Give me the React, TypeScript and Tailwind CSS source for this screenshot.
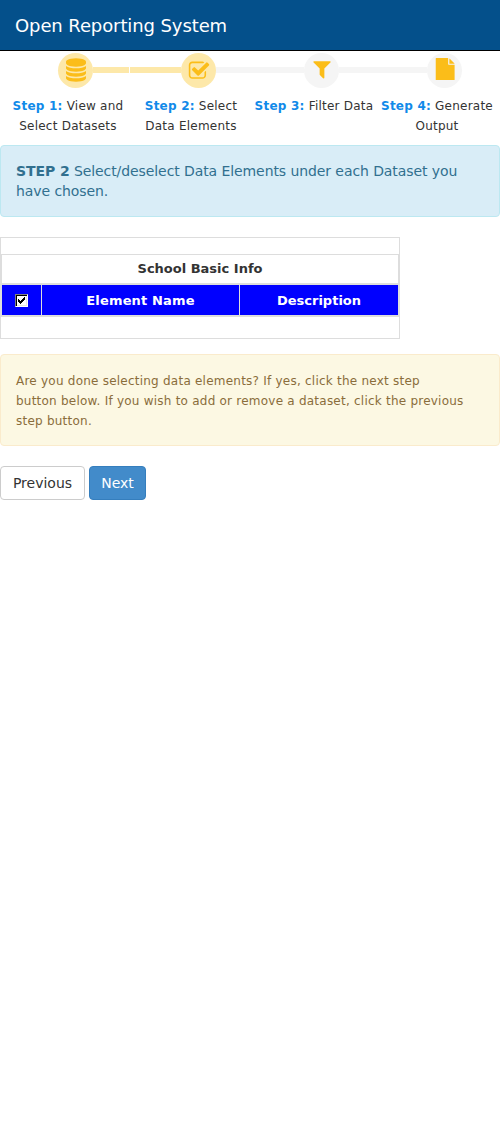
import { useState } from "react";

type StepItem = {
  label: string;
  lines: string[];
  done: boolean;
  icon: string;
  viewBox: string;
  iconClass: string;
};

const steps: StepItem[] = [
  {
    label: "Step 1:",
    lines: ["View and", "Select Datasets"],
    done: true,
    viewBox: "0 0 1536 1792",
    iconClass: "mb-[1px] ml-[1px] h-[24px] w-[20px]",
    icon: "M768 768q237 0 443-43t325-127v170q0 69-103 128t-280 93.5-385 34.5-385-34.5-280-93.5-103-128v-170q119 84 325 127t443 43zm0 768q237 0 443-43t325-127v170q0 69-103 128t-280 93.5-385 34.5-385-34.5-280-93.5-103-128v-170q119 84 325 127t443 43zm0-384q237 0 443-43t325-127v170q0 69-103 128t-280 93.5-385 34.5-385-34.5-280-93.5-103-128v-170q119 84 325 127t443 43zm0-1152q208 0 385 34.5t280 93.5 103 128v128q0 69-103 128t-280 93.5-385 34.5-385-34.5-280-93.5-103-128v-128q0-69 103-128t280-93.5 385-34.5z",
  },
  {
    label: "Step 2:",
    lines: ["Select", "Data Elements"],
    done: true,
    viewBox: "0 0 1792 1792",
    iconClass: "ml-[1px] h-[22px] w-[22px]",
    icon: "M1472 930v318q0 119-84.5 203.5t-203.5 84.5h-832q-119 0-203.5-84.5t-84.5-203.5v-832q0-119 84.5-203.5t203.5-84.5h832q63 0 117 25 15 7 18 23 3 17-9 29l-49 49q-10 10-23 10-3 0-9-2-23-6-45-6h-832q-66 0-113 47t-47 113v832q0 66 47 113t113 47h832q66 0 113-47t47-113v-254q0-13 9-22l64-64q10-10 23-10 6 0 12 3 20 8 20 29zm231-489l-814 814q-24 24-57 24t-57-24l-430-430q-24-24-24-57t24-57l110-110q24-24 57-24t57 24l263 263 647-647q24-24 57-24t57 24l110 110q24 24 24 57t-24 57z",
  },
  {
    label: "Step 3:",
    lines: ["Filter Data"],
    done: false,
    viewBox: "0 0 1792 1792",
    iconClass: "mb-[3px] h-[22px] w-[22px]",
    icon: "M1595 295q17 41-14 70l-493 493v742q0 42-39 59-13 5-25 5-27 0-45-19l-256-256q-19-19-19-45v-486l-493-493q-31-29-14-70 17-39 59-39h1280q42 0 59 39z",
  },
  {
    label: "Step 4:",
    lines: ["Generate", "Output"],
    done: false,
    viewBox: "0 0 1792 1792",
    iconClass: "mb-[3px] ml-[1px] h-[22px] w-[22px]",
    icon: "M1250 460v-420q22 14 36 28l364 364q14 14 28 28h-428zm-96 25q0 40 28 55t68 15h428v1209q0 28-28 28h-1480q-28 0-28-28v-1736q0-28 28-28h984v485z",
  },
];

function StepDot({ step }: { step: StepItem }) {
  return (
    <div className={`flex size-[35px] shrink-0 items-center justify-center rounded-full ${step.done ? "bg-[#fde8a9]" : "bg-[#f5f5f5]"}`}>
      <svg viewBox={step.viewBox} className={`${step.iconClass} shrink-0 fill-[#fbbd19]`}>
        <path d={step.icon} />
      </svg>
    </div>
  );
}

function Wizard() {
  return (
    <div className="pt-[2px]">
      <div className="flex items-start pl-[58px]">
        <StepDot step={steps[0]} />
        <div className="mt-[14px] h-[6px] w-[36px] bg-[#fde8a9]" />
        <div className="mt-[14px] ml-px h-[6px] w-[51px] bg-[#fde8a9]" />
        <StepDot step={steps[1]} />
        <div className="mt-[14px] h-[6px] w-[88px] bg-[#f5f5f5]" />
        <StepDot step={steps[2]} />
        <div className="mt-[14px] h-[6px] w-[88px] bg-[#f5f5f5]" />
        <StepDot step={steps[3]} />
      </div>
      <div className="flex h-[47px] pt-[8px] pl-[6.5px] text-[12px] leading-[20px] tracking-[0.23px]">
        {steps.map((s) => (
          <div key={s.label} className="flex w-[123px] shrink-0 flex-col items-center whitespace-nowrap">
            <div className="flex gap-[4px]">
              <b className="text-[#118ae9]">{s.label}</b>
              <span>{s.lines[0]}</span>
            </div>
            {s.lines[1] && <div>{s.lines[1]}</div>}
          </div>
        ))}
      </div>
    </div>
  );
}

function Checkbox() {
  const [on, setOn] = useState(true);
  return (
    <button
      type="button"
      role="checkbox"
      aria-checked={on}
      onClick={() => setOn(!on)}
      className="flex size-[13px] items-center justify-center border border-t-[#808080] border-r-white border-b-white border-l-[#808080] bg-white shadow-[inset_1px_1px_0_#000,inset_-1px_-1px_0_#e8e6e0]"
    >
      {on && (
        <svg viewBox="0 0 7 7" className="size-[7px] fill-black" shapeRendering="crispEdges">
          <path d="M0 2h1v1h1v1h1v-1h1v-1h1v-1h1v-1h1v3h-1v1h-1v1h-1v1h-1v1h-1v-1h-1v-1h-1z" />
        </svg>
      )}
    </button>
  );
}

function ElementTable() {
  return (
    <div className="mt-[20px] h-[102px] w-[400px] border border-[#ddd] pt-[16px] text-[13px] font-bold">
      <div className="border border-b-0 border-[#ddd]">
        <div className="flex h-[28px] items-center justify-center">School Basic Info</div>
        <div className="flex h-[34px] border-y-2 border-[#ddd] bg-[#0000ff] text-white">
          <div className="flex w-[40px] items-center justify-center border-r border-[#ddd]">
            <Checkbox />
          </div>
          <div className="flex w-[198px] items-center justify-center border-r border-[#ddd] pt-[2px] tracking-[0.15px]">Element Name</div>
          <div className="flex flex-1 items-center justify-center pt-[2px]">Description</div>
        </div>
      </div>
    </div>
  );
}

export default function App() {
  return (
    <div className="min-h-[1134px] w-[500px] bg-white font-['DejaVu_Sans',sans-serif] text-[14px] leading-[20px] text-[#333]">
      <header className="flex h-[51px] items-center border-b border-black bg-[#04508b] pt-[2px] pl-[15px] text-[18px] tracking-[-0.1px] text-white">
        Open Reporting System
      </header>
      <Wizard />
      <div className="mt-[10px] h-[72px] rounded-[4px] border border-[#bce8f1] bg-[#d9edf7] px-[15px] pt-[15px] tracking-[-0.085px] text-[#31708f]">
        <b>STEP 2</b> Select/deselect Data Elements under each Dataset you<br />have chosen.
      </div>
      <ElementTable />
      <div className="mt-[15px] h-[92px] rounded-[4px] border border-[#faebcc] bg-[#fcf8e3] px-[15px] pt-[16px] text-[12px] tracking-[0.23px] text-[#8a6d3b]">
        Are you done selecting data elements? If yes, click the next step<br />
        button below. If you wish to add or remove a dataset, click the previous<br />
        step button.
      </div>
      <div className="mt-[20px] flex gap-[4px]">
        <button type="button" className="h-[34px] w-[85px] rounded-[4px] border border-[#ccc] bg-white">Previous</button>
        <button type="button" className="h-[34px] w-[57px] rounded-[4px] border border-[#357ebd] bg-[#428bca] text-white">Next</button>
      </div>
    </div>
  );
}
